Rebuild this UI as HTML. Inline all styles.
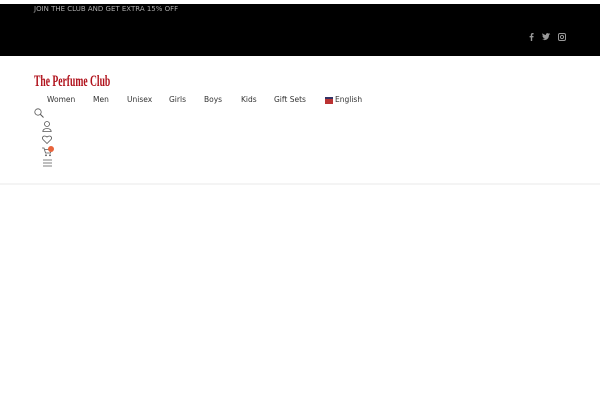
<!DOCTYPE html>
<html><head><style>
body{margin:0;width:600px;height:400px;background:#fff;font-family:"DejaVu Sans","Liberation Sans",sans-serif;position:relative;overflow:hidden}
.top{position:absolute;left:0;top:4px;width:600px;height:52px;background:#000}
.top .t{position:absolute;left:34px;top:1px;color:#aaa;font-size:7px}
.ic{position:absolute}
.logo{position:absolute;left:34px;top:73px;color:#b0111b;font-family:"Liberation Serif",serif;font-weight:bold;font-size:16px;transform:scaleX(.6);transform-origin:left;white-space:nowrap}
.nav{position:absolute;top:95px;font-size:7.5px;color:#333}
.line{position:absolute;left:0;top:183px;width:600px;height:2px;background:#f4f4f4}
</style></head><body>
<div class="top"><div class="t">JOIN THE CLUB AND GET EXTRA 15% OFF</div>
<svg class="ic" style="left:529px;top:29px" width="5" height="8" viewBox="0 0 5 8"><path d="M3.2 8V4.4h1.2l.2-1.4H3.2v-.9c0-.4.1-.7.7-.7h.7V.1C4.5.1 4 0 3.5 0 2.5 0 1.8.6 1.8 1.8V3H.6v1.4h1.2V8z" fill="#999"/></svg>
<svg class="ic" style="left:542px;top:29px" width="9" height="8" viewBox="0 0 9 8"><path d="M0 6.5c3 1.5 7 0 7-4.5l1.5-1-1.3.2L8 0 6.6.6C5.5-.5 3.5.5 4 2 2.5 2 1 1 .5.3c-.5 1 0 2 .8 2.5L.4 2.6C.4 3.6 1 4.2 2 4.5H1c.3.8 1 1.2 2 1.3C2.2 6.4 1 6.7 0 6.5z" fill="#999"/></svg>
<svg class="ic" style="left:558px;top:29px" width="8" height="8" viewBox="0 0 8 8"><rect x=".5" y=".5" width="7" height="7" rx="1.5" fill="none" stroke="#999"/><circle cx="4" cy="4" r="1.6" fill="none" stroke="#999"/></svg>
</div>
<div class="logo">The Perfume Club</div>
<div class="nav" style="left:47px">Women</div>
<div class="nav" style="left:93px">Men</div>
<div class="nav" style="left:127px">Unisex</div>
<div class="nav" style="left:169px">Girls</div>
<div class="nav" style="left:204px">Boys</div>
<div class="nav" style="left:241px">Kids</div>
<div class="nav" style="left:274px">Gift Sets</div>
<div style="position:absolute;left:325px;top:97px;width:8px;height:5px;background:#b33;border-top:2px solid #336"></div>
<div class="nav" style="left:335px">English</div>
<svg class="ic" style="left:34px;top:108px" width="10" height="10" viewBox="0 0 10 10"><circle cx="4" cy="4" r="3.2" fill="none" stroke="#555" stroke-width=".8"/><path d="M6.4 6.4L9.5 9.5" stroke="#555"/></svg>
<svg class="ic" style="left:42px;top:121px" width="10" height="11" viewBox="0 0 10 11"><circle cx="5" cy="3" r="2.5" fill="none" stroke="#555" stroke-width=".8"/><path d="M.8 10.5C.8 6.5 9.2 6.5 9.2 10.5z" fill="none" stroke="#555" stroke-width=".8"/></svg>
<svg class="ic" style="left:42px;top:135px" width="10" height="9" viewBox="0 0 10 9"><path d="M5 8.5L1 4.5C-.5 2.5 1.5-.5 5 2 8.5-.5 10.5 2.5 9 4.5z" fill="none" stroke="#555" stroke-width=".8"/></svg>
<svg class="ic" style="left:42px;top:147px" width="10" height="10" viewBox="0 0 10 10"><path d="M0 1h2l1.5 5h5l1-3.5H3" fill="none" stroke="#555" stroke-width=".8"/><circle cx="4" cy="8.3" r=".9" fill="#555"/><circle cx="8" cy="8.3" r=".9" fill="#555"/></svg>
<div style="position:absolute;left:48px;top:146px;width:6px;height:6px;border-radius:3px;background:#e8643c"></div>
<svg class="ic" style="left:43px;top:159px" width="10" height="8" viewBox="0 0 10 8"><path d="M0 1h9M0 4h9M0 7h9" stroke="#555" stroke-width=".8"/></svg>
<div class="line"></div>
</body></html>
